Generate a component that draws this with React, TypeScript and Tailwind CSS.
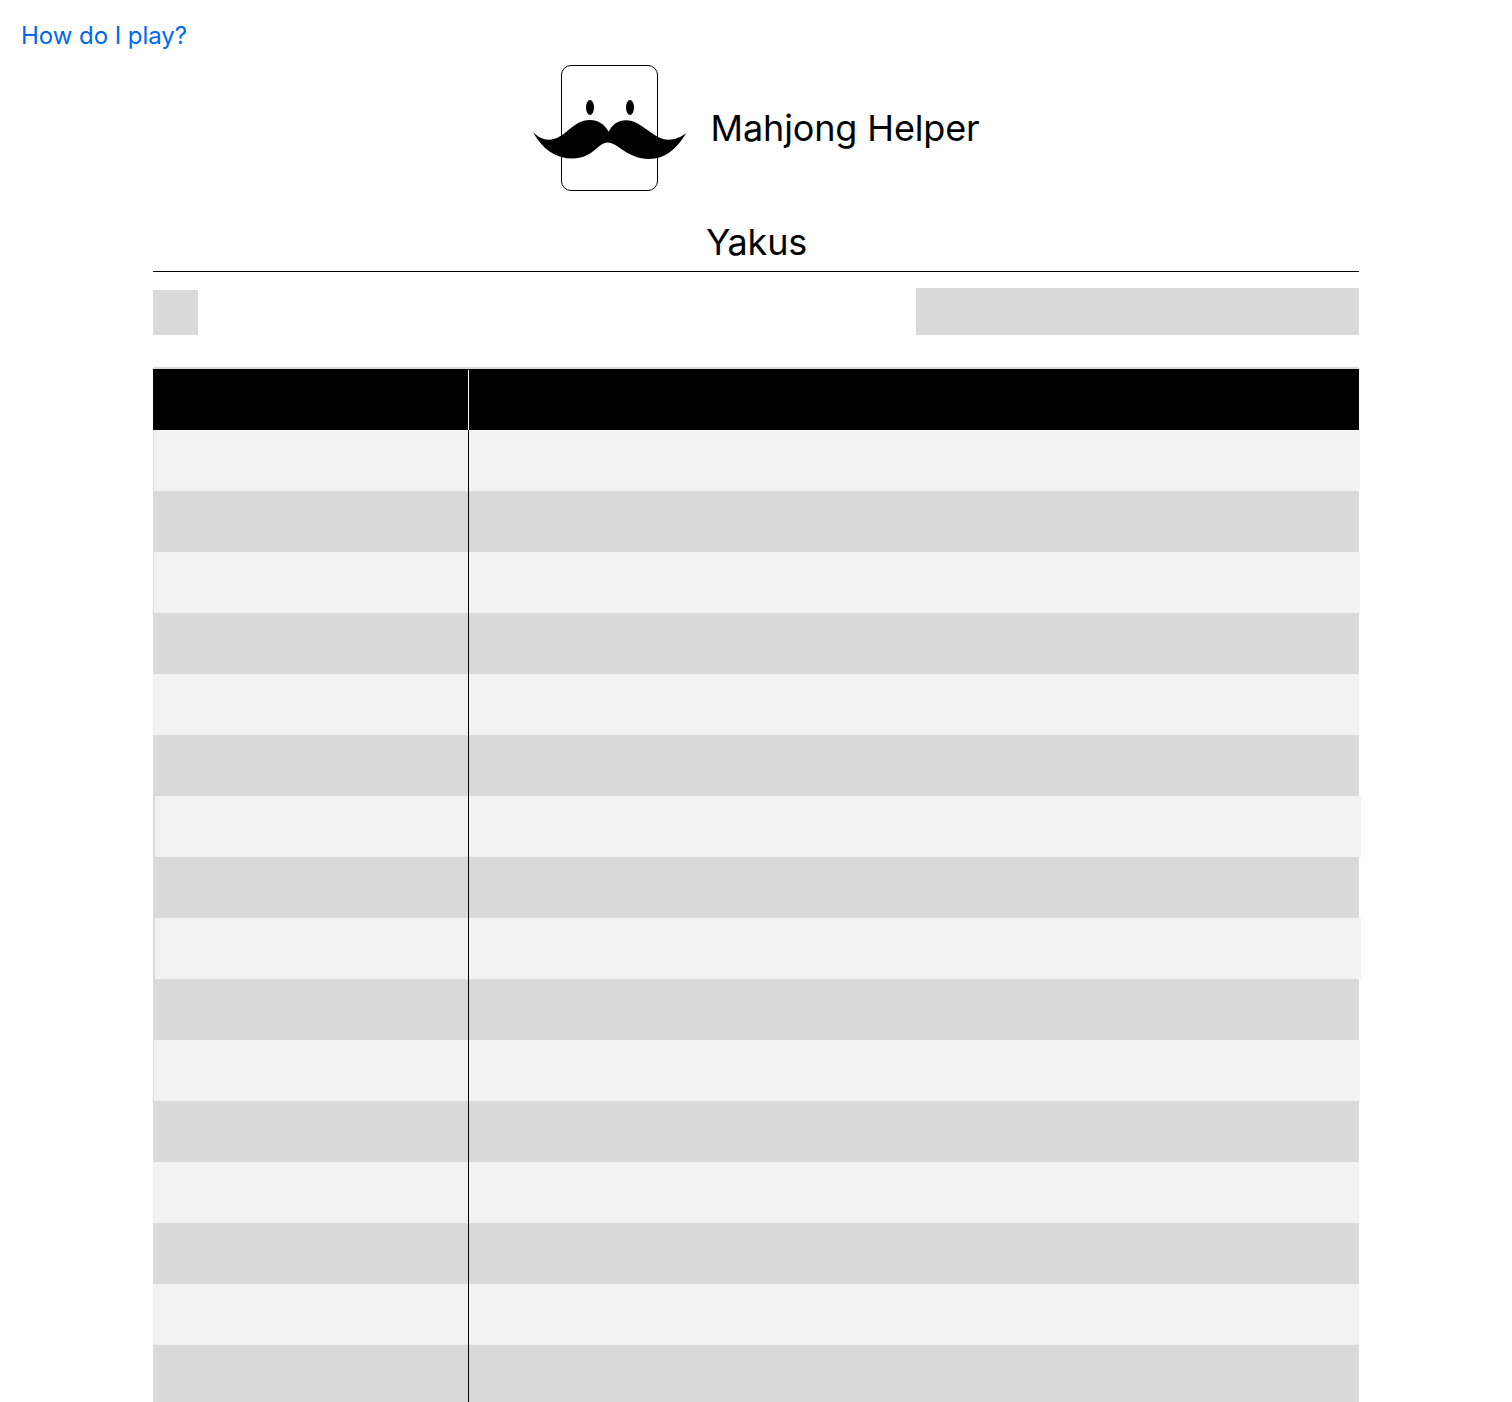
const rows: { tone: "light" | "dark"; inset: 0 | 1 | 2 }[] = [
  { tone: "light", inset: 1 },
  { tone: "dark", inset: 0 },
  { tone: "light", inset: 1 },
  { tone: "dark", inset: 0 },
  { tone: "light", inset: 0 },
  { tone: "dark", inset: 0 },
  { tone: "light", inset: 2 },
  { tone: "dark", inset: 0 },
  { tone: "light", inset: 2 },
  { tone: "dark", inset: 0 },
  { tone: "light", inset: 1 },
  { tone: "dark", inset: 0 },
  { tone: "light", inset: 0 },
  { tone: "dark", inset: 0 },
  { tone: "light", inset: 0 },
  { tone: "dark", inset: 0 },
];

const insetMargin = { 0: "ml-0", 1: "ml-px", 2: "ml-0.5" };
const firstColumn = { 0: "w-[315px]", 1: "w-[314px]", 2: "w-[313px]" };
const toneFill = { light: "bg-[#f2f2f2]", dark: "bg-[#d9d9d9]" };

function Logo() {
  return (
    <svg width="154" height="126" viewBox="533 65 154 126" className="shrink-0">
      <rect x="561.5" y="65.5" width="96" height="125" rx="9.5" fill="#fff" stroke="#000" />
      <ellipse cx="590" cy="107.5" rx="4" ry="7.5" />
      <ellipse cx="630" cy="107.5" rx="4" ry="7.5" />
      <path d="M533 132C538 137 543 139.7 549 139.7C565 139.7 572 120 590 120C598 120 605 124.5 608.7 131.8C612 124.5 618 120.2 626 120.2C642 120.2 653 139.7 669 139.7C675 139.7 681 137 686.2 133C677 149 665 159 649 159C627 159 618 142.6 607.5 142.6C598 142.6 593 158.6 572.5 158.6C556 158.6 542 149 533 132Z" />
    </svg>
  );
}

export default function App() {
  return (
    <div className="flex h-[1402px] w-[1512px] flex-col overflow-hidden bg-white font-['Inter',sans-serif] text-black">
      <a
        href="#"
        className="ml-[21px] mt-[21px] h-[29px] self-start text-2xl leading-[29px] tracking-[-0.05px] text-[#0068f0]"
      >
        How do I play?
      </a>
      <header className="ml-[533px] mt-[15px] flex h-[126px] items-center">
        <Logo />
        <h1 className="ml-[23.5px] whitespace-nowrap text-4xl leading-[44px] tracking-[-0.13px]">
          Mahjong Helper
        </h1>
      </header>
      <main className="ml-[153px] w-[1206px]">
        <h2 className="mt-[29px] h-[51px] pl-px text-center text-4xl leading-[44px] tracking-[-0.2px]">
          Yakus
        </h2>
        <div className="h-px bg-black" />
        <div className="mt-4 flex h-[47px] items-end justify-between">
          <div className="size-[45px] bg-[#d9d9d9]" />
          <div className="h-[47px] w-[443px] bg-[#d9d9d9]" />
        </div>
        <div className="mt-8 border-t-2 border-[#d9d9d9]">
          <div className="flex h-[61px] bg-black">
            <div className="w-[315px]" />
            <div className="mt-px w-px bg-white" />
          </div>
          {rows.map((row, i) => (
            <div key={i} className="h-[61px] bg-[#d9d9d9]">
              <div className={`flex h-full w-[1206px] ${insetMargin[row.inset]} ${toneFill[row.tone]}`}>
                <div className={firstColumn[row.inset]} />
                <div className="w-px bg-black" />
              </div>
            </div>
          ))}
        </div>
      </main>
    </div>
  );
}
